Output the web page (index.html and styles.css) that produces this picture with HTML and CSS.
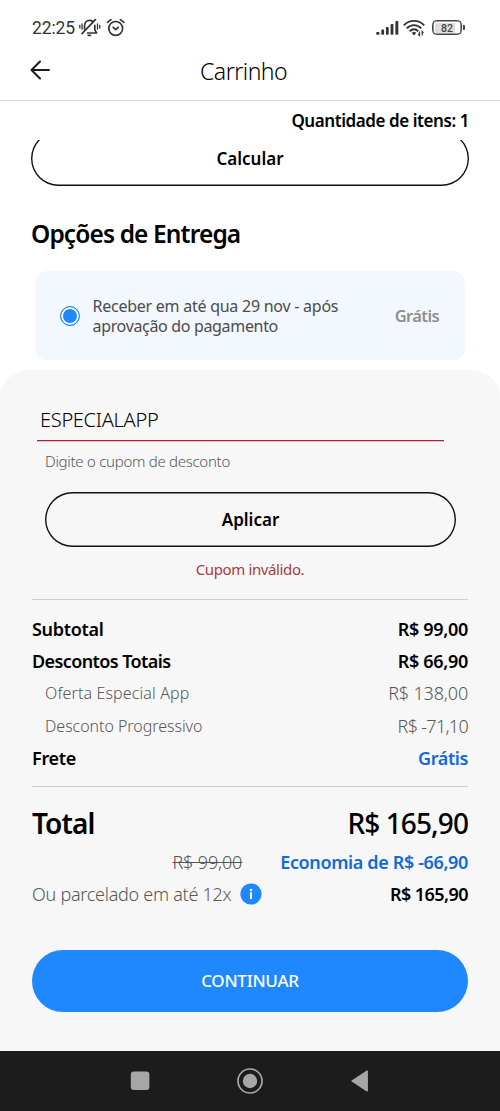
FILE: index.html
```html
<!DOCTYPE html>
<html lang="pt-BR">
<head>
<meta charset="utf-8">
<title>Carrinho</title>
<link rel="stylesheet" href="styles.css">
</head>
<body>
<div class="phone">
  <div class="status">
    <span class="clock">22:25</span>
    <svg class="bell" width="22" height="20" viewBox="0 0 22 20" fill="none" stroke="#333" stroke-width="1.700" stroke-linecap="round" stroke-linejoin="round">
      <path d="M5.500 11V8C5.500 4.500 7.900 2.400 10.600 2.400c1.300 0 2.400.3 3.300 1.100M15.800 7.400V11.800L17.600 15H8.600"/>
      <path d="M9.200 17.300H11.400"/>
      <path d="M16.400 1.700L3 15.700"/>
      <path d="M.8 7.300v2.600M3 5.800v5.400M18.500 5.800v5.400M20.700 7.300v2.600" stroke-width="1.300"/>
    </svg>
    <svg class="alarm" width="20" height="20" viewBox="0 0 20 20" fill="none" stroke="#333" stroke-width="1.700" stroke-linecap="round" stroke-linejoin="round">
      <circle cx="9.700" cy="10.400" r="6.900"/>
      <path d="M1.500 4.300L5 1.600M17.900 4.300L14.400 1.600M7.200 9.400L9.700 11.700L12.200 9.400"/>
    </svg>
    <span class="spacer"></span>
    <svg class="signal" width="24" height="16" viewBox="0 0 24 16" fill="#333">
      <rect x="1.200" y="12" width="3.300" height="2.700" rx="1"/>
      <rect x="6.300" y="9.600" width="2.800" height="5.100" rx=".8"/>
      <rect x="10.900" y="7" width="2.800" height="7.700" rx=".8"/>
      <rect x="15.600" y="4" width="2.800" height="10.700" rx=".8"/>
      <rect x="20.400" y="1" width="2.900" height="13.700" rx=".8"/>
    </svg>
    <svg class="wifi" width="22" height="18" viewBox="0 0 22 18" fill="none" stroke="#333" stroke-width="1.900">
      <path d="M.8 6.300C6.300.4 15.700.4 21.200 6.300M3.700 9.300C8 5 14 5 18.300 9.300M6.700 12.200C9.400 9.700 12.600 9.700 15.300 12.200"/>
      <path d="M8.700 13.800L11 12.700L13.300 13.800L11 16.600Z" fill="#333" stroke="none"/>
      <path d="M16.500 12.500V16.500L15.200 15.100M19.200 16.500V12.500L20.500 13.900" stroke-width="1.200"/>
    </svg>
    <span class="battery"><span class="level">82</span></span><span class="tip"></span>
  </div>

  <header class="header">
    <svg class="back" width="20" height="20" viewBox="0 0 20 20" fill="none" stroke="#1b1b1b" stroke-width="2.100" stroke-linecap="round" stroke-linejoin="round"><path d="M10 1.600L1.500 10L10 18.400M1.500 10H18.900"/></svg>
    <h1 class="title">Carrinho</h1>
  </header>

  <main class="content">
    <div class="count">Quantidade de itens: 1</div>
    <div class="scrolled"><button class="outline calc">Calcular</button></div>
    <h2 class="heading">Opções de Entrega</h2>
    <label class="option">
      <span class="radio"></span>
      <span class="desc"><span class="line1">Receber em até qua 29 nov - após</span><br><span class="line2">aprovação do pagamento</span></span>
      <span class="price">Grátis</span>
    </label>
  </main>

  <section class="sheet">
    <div class="coupon">ESPECIALAPP</div>
    <div class="hint">Digite o cupom de desconto</div>
    <button class="outline apply">Aplicar</button>
    <div class="error">Cupom inválido.</div>

    <div class="summary">
      <div class="row strong"><span>Subtotal</span><span>R$ 99,00</span></div>
      <div class="row strong"><span class="tight">Descontos Totais</span><span>R$ 66,90</span></div>
      <div class="row detail"><span class="wide">Oferta Especial App</span><span class="value">R$ 138,00</span></div>
      <div class="row detail"><span>Desconto Progressivo</span><span class="value tight">R$ -71,10</span></div>
      <div class="row strong"><span>Frete</span><span class="free">Grátis</span></div>
    </div>

    <div class="totals">
      <div class="grand"><span>Total</span><span class="amount">R$ 165,90</span></div>
      <div class="saving"><s>R$ 99,00</s><span class="eco">Economia de R$ -66,90</span></div>
      <div class="parcel">
        <span class="plan">Ou parcelado em até 12x</span>
        <svg width="22" height="22" viewBox="0 0 22 22"><circle cx="11" cy="11" r="10.600" fill="#1f88fe"/><circle cx="11" cy="6.900" r="1.250" fill="#fff"/><path d="M11 9.300V16" stroke="#fff" stroke-width="2"/></svg>
        <span class="due">R$ 165,90</span>
      </div>
    </div>

    <button class="continue">CONTINUAR</button>
  </section>

  <nav class="nav">
    <svg width="20" height="24" viewBox="0 0 20 24"><rect x=".8" y="2.600" width="18.600" height="18.500" rx="3" fill="#a6a6a6"/></svg>
    <svg width="26" height="26" viewBox="0 0 26 26"><circle cx="13" cy="13" r="12" fill="none" stroke="#a6a6a6" stroke-width="1.700"/><circle cx="13" cy="13" r="7.200" fill="#a6a6a6"/></svg>
    <svg width="20" height="24" viewBox="0 0 20 24"><path d="M2 12L17.200 2.200V21.800Z" fill="#a6a6a6" stroke="#a6a6a6" stroke-width="1.400" stroke-linejoin="round"/></svg>
  </nav>
</div>
</body>
</html>
```

FILE: styles.css
```css
* { box-sizing: border-box; }
body { margin: 0; background: #fff; font-family: "Noto Sans", sans-serif; color: #000; }
.phone { width: 500px; height: 1111px; display: flex; flex-direction: column; overflow: hidden; }
h1, h2 { margin: 0; }
button { font-family: inherit; padding: 0; display: block; }
svg { display: block; flex: none; }

.status { height: 50px; padding: 5px 35px 0 32px; display: flex; align-items: center; flex: none; }
.clock { font: 400 17.5px/20px Roboto, sans-serif; letter-spacing: -0.1px; color: #333; width: 47px; }
.alarm { margin-left: 5px; }
.spacer { flex: 1; }
.signal { margin-right: 4px; }
.wifi { margin-right: 7px; }
.battery { width: 30px; height: 15px; border: 1px solid #444; box-shadow: inset 0 0 0 .6px #444; border-radius: 4.5px; padding: 1.5px; }
.level { display: block; height: 10px; border-radius: 2px; background: linear-gradient(90deg, #dedede 82%, #fff 82%); font: 500 10.5px/11px Roboto, sans-serif; text-align: center; color: #444; }
.tip { width: 2px; height: 5px; background: #444; border-radius: 0 1px 1px 0; margin-left: 1px; }

.header { height: 51px; flex: none; padding: 0 30px 10px; display: flex; align-items: center; border-bottom: 1px solid #d5d5d5; }
.title { font-size: 23px; line-height: 32px; font-weight: 300; letter-spacing: -0.5px; margin: 2px 0 0 150px; }

.content { height: 269px; flex: none; padding: 0 31px; }
.count { height: 39px; line-height: 39px; text-align: right; font-size: 17px; font-weight: 600; letter-spacing: -0.43px; }
.scrolled { height: 46px; display: flex; align-items: flex-end; overflow: hidden; }
.outline { height: 55px; flex: none; background: transparent; border: 0; box-shadow: inset 0 0 0 1.4px #111; border-radius: 28px; font-size: 17px; font-weight: 600; color: #000; }
.calc { width: 438px; }
.heading { font-size: 24.5px; line-height: 36px; font-weight: 600; letter-spacing: -0.88px; margin: 30px 0 19px; }
.option { height: 89px; margin: 0 4px; border-radius: 12px; background: #f3f7fe; display: flex; align-items: center; padding: 0 26px 0 25px; }
.radio { width: 20px; height: 20px; border: 1.5px solid #1f88fe; border-radius: 50%; background: #1f88fe; box-shadow: inset 0 0 0 2px #f3f7fe; }
.desc { font-size: 16px; line-height: 20px; color: #4c4c4c; margin-left: 12.5px; flex: 1; }
.line1 { letter-spacing: -0.25px; }
.line2 { letter-spacing: -0.33px; }
.price { font-size: 16.5px; font-weight: 600; letter-spacing: -0.6px; color: #8f8f8f; }

.sheet { height: 681px; flex: none; background: #f7f7f7; border-radius: 28px 28px 0 0; padding: 29px 32px 0; }
.coupon { height: 42px; margin: 0 24px 0 5px; padding-left: 3px; border-bottom: 1px solid #a52639; box-shadow: 0 1px 0 #f0bcc5; line-height: 41px; font-size: 20px; font-weight: 300; letter-spacing: -0.3px; }
.hint { margin: 10px 13px 0; line-height: 20px; font-size: 15px; font-weight: 300; letter-spacing: -0.28px; color: #585858; }
.apply { width: 411px; margin: 21px 0 0 13px; }
.error { line-height: 20px; margin: 12px 0 20px; text-align: center; font-size: 15px; letter-spacing: -0.38px; color: #a93a3c; }

.summary { height: 188px; padding-top: 13px; border-top: 1px solid #cfcfcf; border-bottom: 1px solid #cfcfcf; }
.row { height: 32.2px; line-height: 32.2px; display: flex; justify-content: space-between; }
.strong { font-size: 18px; font-weight: 600; letter-spacing: -0.3px; }
.strong .tight { letter-spacing: -0.6px; }
.free { color: #1069dd; letter-spacing: -0.4px; }
.detail { padding-left: 13px; font-size: 16px; font-weight: 300; color: #585858; }
.detail span { letter-spacing: -0.04px; }
.detail .wide { letter-spacing: 0.13px; }
.detail .value { font-size: 18px; letter-spacing: -0.16px; }
.detail .value.tight { letter-spacing: -0.7px; }

.totals { padding-top: 14px; }
.grand { height: 44px; line-height: 44px; display: flex; justify-content: space-between; font-size: 28px; font-weight: 600; letter-spacing: -0.85px; }
.amount { letter-spacing: -0.9px; font-weight: 500; }
.saving { height: 32px; line-height: 34px; display: flex; justify-content: flex-end; gap: 38px; font-size: 18px; }
.saving s { font-weight: 300; letter-spacing: -0.15px; color: #555; }
.eco { font-weight: 600; letter-spacing: -0.36px; color: #1069dd; }
.parcel { height: 34px; display: flex; align-items: center; font-size: 18px; }
.plan { font-weight: 300; letter-spacing: -0.27px; color: #585858; margin-right: 9px; }
.due { margin-left: auto; font-weight: 600; letter-spacing: -0.55px; }
.continue { width: 436px; height: 62px; margin-top: 39px; border: 0; border-radius: 31px; background: #1f88fe; color: #fff; font-size: 17px; font-weight: 500; letter-spacing: -0.25px; padding-bottom: 1px; }

.nav { height: 60px; flex: none; background: #1c1c1c; display: flex; justify-content: space-between; align-items: center; padding: 0 130px; }
```
